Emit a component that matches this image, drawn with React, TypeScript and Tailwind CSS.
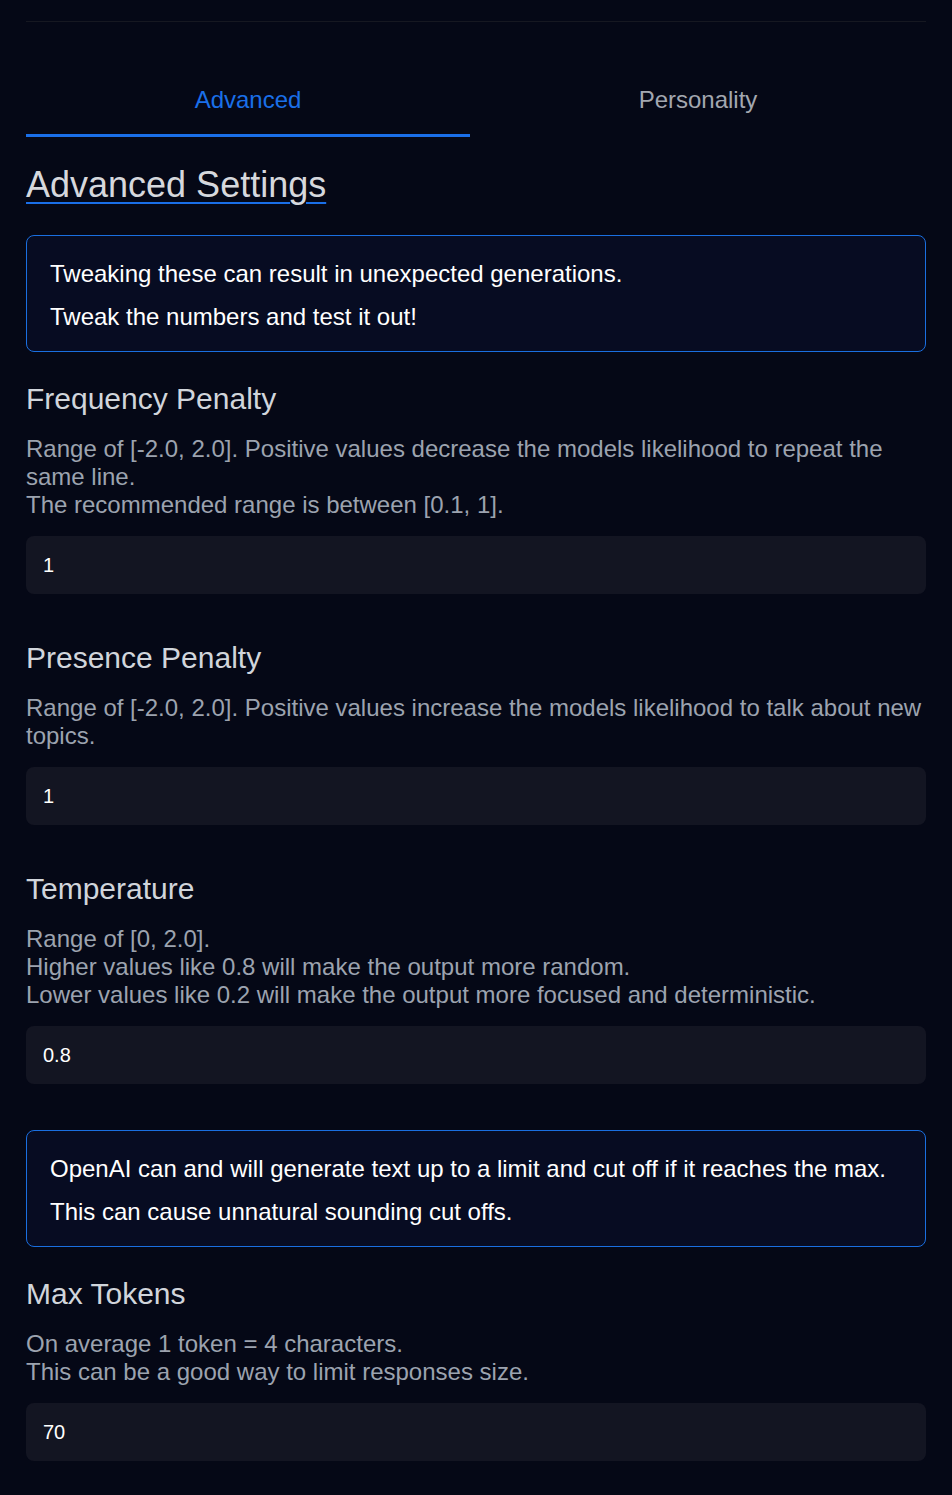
import React from 'react'

const Field = ({ label, lines, value }: { label: string; lines: string[]; value: string }) => {
  return (
    <div className="flex flex-col">
      <label className="pt-[1px] text-[30px] leading-[34px] text-[#d1d5db]">{label}</label>
      <div className="mt-[19px] text-[24px] leading-[28px] text-[#9ca3af]">
        {lines.map((l, i) => (
          <div key={i}>{l}</div>
        ))}
      </div>
      <input
        className="mt-[17px] h-[58px] w-full rounded-lg bg-[#131522] px-[17px] text-[20px] text-white outline-none"
        defaultValue={value}
      />
    </div>
  )
}

const Notice = ({ lines }: { lines: string[] }) => {
  return (
    <div className="rounded-lg border border-[#1a6fe0] bg-[#070c22] px-[23px] pt-[24px] pb-[20px] text-[24px] leading-[28px] text-white">
      {lines.map((l, i) => (
        <p key={i} className={i > 0 ? 'mt-[15px]' : ''}>
          {l}
        </p>
      ))}
    </div>
  )
}

export default function App() {
  return (
    <div
      className="min-h-screen bg-[#050816] px-[26px] pb-[34px]"
      style={{ fontFamily: '"Liberation Sans", Arial, sans-serif' }}
    >
      <div className="pt-[21px]">
        <div className="h-[1px] bg-[#161821]" />
      </div>

      {/* tabs */}
      <div className="mt-[44px] flex">
        <button className="flex-auto border-b-[3px] border-[#1a6fe8] py-[20px] text-[24px] leading-[28px] text-[#1a6fe8]">
          Advanced
        </button>
        <button className="flex-auto border-b-[3px] border-transparent py-[20px] text-[24px] leading-[28px] text-[#a3a7b0]">
          Personality
        </button>
      </div>

      <h2 className="mt-[27px] text-[36px] leading-[41px] text-[#d6d8dd] underline decoration-[#1a6fe8] decoration-2 underline-offset-[5px]">
        Advanced Settings
      </h2>

      <div className="mt-[30px]">
        <Notice lines={['Tweaking these can result in unexpected generations.', 'Tweak the numbers and test it out!']} />
      </div>

      <div className="mt-[29px] flex flex-col gap-[46px]">
        <Field
          label="Frequency Penalty"
          lines={[
            'Range of [-2.0, 2.0]. Positive values decrease the models likelihood to repeat the same line.',
            'The recommended range is between [0.1, 1].',
          ]}
          value="1"
        />
        <Field
          label="Presence Penalty"
          lines={['Range of [-2.0, 2.0]. Positive values increase the models likelihood to talk about new topics.']}
          value="1"
        />
        <Field
          label="Temperature"
          lines={[
            'Range of [0, 2.0].',
            'Higher values like 0.8 will make the output more random.',
            'Lower values like 0.2 will make the output more focused and deterministic.',
          ]}
          value="0.8"
        />
        <Notice
          lines={[
            'OpenAI can and will generate text up to a limit and cut off if it reaches the max.',
            'This can cause unnatural sounding cut offs.',
          ]}
        />
      </div>

      <div className="mt-[29px]">
        <Field
          label="Max Tokens"
          lines={['On average 1 token = 4 characters.', 'This can be a good way to limit responses size.']}
          value="70"
        />
      </div>
    </div>
  )
}
